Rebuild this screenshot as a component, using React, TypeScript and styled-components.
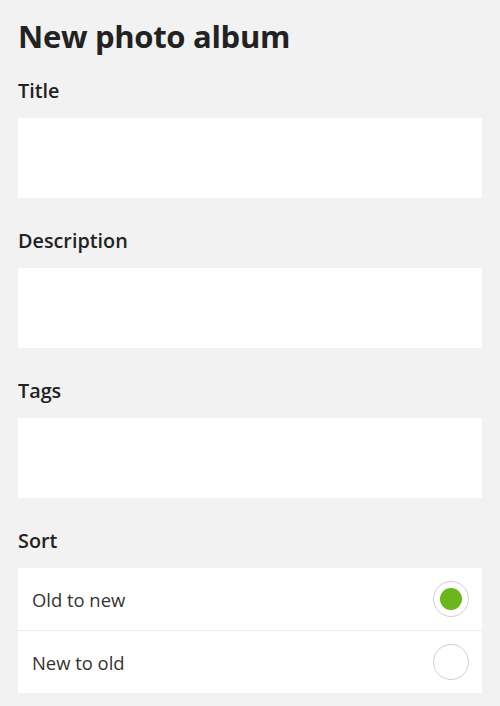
import React, { useState } from 'react';
import styled, { createGlobalStyle } from 'styled-components';

const GlobalStyle = createGlobalStyle`
  html, body {
    margin: 0;
    background: #f2f2f2;
  }
  body {
    font-family: "Open Sans", "Liberation Sans", sans-serif;
    color: #222;
  }
`;

const Page = styled.div`
  padding: 16px 18px 14px;
`;

const Heading = styled.h1`
  margin: 0;
  font-size: 31px;
  line-height: 40px;
  font-weight: 700;
  letter-spacing: -0.3px;
  color: #222;
`;

const Field = styled.div`
  display: flex;
  flex-direction: column;
`;

const Label = styled.label<{ $first?: boolean }>`
  display: block;
  margin: ${p => (p.$first ? '22px' : '30px')} 0 14px;
  font-size: 19.8px;
  line-height: 26px;
  font-weight: 600;
  color: #222;
`;

const Input = styled.input`
  box-sizing: border-box;
  width: 100%;
  height: 80px;
  border: none;
  background: #fff;
  padding: 0 14px;
  font: inherit;
  font-size: 18px;
  outline: none;
`;

const OptionList = styled.div`
  background: #fff;
  display: flex;
  flex-direction: column;
`;

const Option = styled.label`
  display: flex;
  align-items: center;
  justify-content: space-between;
  height: 62px;
  padding: 0 13px 0 14px;
  font-size: 18.4px;
  color: #333;
  cursor: pointer;
  & + & {
    border-top: 1.5px solid #ececec;
  }
`;

const Radio = styled.span<{ $checked: boolean }>`
  box-sizing: border-box;
  width: 36px;
  height: 36px;
  border-radius: 50%;
  border: 1.5px solid #cfcfcf;
  background: #fff;
  display: flex;
  align-items: center;
  justify-content: center;
  &::after {
    content: '';
    width: 22px;
    height: 22px;
    border-radius: 50%;
    background: ${p => (p.$checked ? '#6bb71b' : 'transparent')};
  }
`;

const sorts = ['Old to new', 'New to old'];

export default function App() {
  const [sort, setSort] = useState(0);

  return (
    <Page>
      <GlobalStyle />
      <Heading>New photo album</Heading>
      <Field>
        <Label $first>Title</Label>
        <Input />
      </Field>
      <Field>
        <Label>Description</Label>
        <Input />
      </Field>
      <Field>
        <Label>Tags</Label>
        <Input />
      </Field>
      <Field>
        <Label>Sort</Label>
        <OptionList>
          {sorts.map((s, i) => (
            <Option key={s} onClick={() => setSort(i)}>
              {s}
              <Radio $checked={sort === i} />
            </Option>
          ))}
        </OptionList>
      </Field>
    </Page>
  );
}
